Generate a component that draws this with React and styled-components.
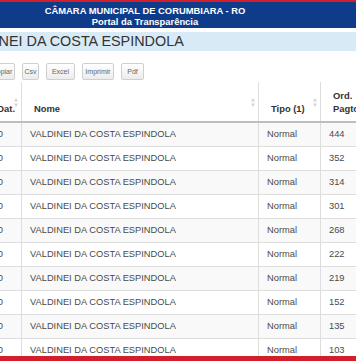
import React from "react";
import styled, { createGlobalStyle } from "styled-components";

const GlobalStyle = createGlobalStyle`
  html, body {
    margin: 0;
    padding: 0;
    overflow: hidden;
    background: #fff;
    font-family: "Liberation Sans", Arial, sans-serif;
  }
`

const Page = styled.div`
  width: 356px;
  height: 361px;
  overflow: hidden;
`

const TopBar = styled.header`
  border-top: 2px solid #d21f2b;
  background: #0e3c8b;
  color: #fff;
  font-weight: bold;
  font-size: 9.4px;
  line-height: 11px;
  text-align: center;
  height: 21px;
  padding: 3px 66px 2px 0;
`

// whole content scrolled to the left, like the original page
const Content = styled.div`
  margin-left: -60px;
`

const TitleBar = styled.h2`
  margin: 4px 0 0;
  height: 19px;
  line-height: 19px;
  background: #d8eaf5;
  color: #333;
  font-size: 14.4px;
  font-weight: normal;
  padding-left: 18px;
  white-space: nowrap;
`

const Toolbar = styled.div`
  display: flex;
  gap: 7px;
  margin-top: 12px;
  padding-left: 49px;
`

const ToolButton = styled.button`
  display: flex;
  align-items: center;
  justify-content: center;
  box-sizing: border-box;
  width: ${(p) => p.$w}px;
  height: 17px;
  padding: 0;
  border: 1px solid #cfcfcf;
  border-radius: 2px;
  background: linear-gradient(#ffffff, #ececec);
  font-family: inherit;
  font-size: 7px;
  color: #666;
`

const Table = styled.table`
  margin-top: 2px;
  width: 430px;
  border-collapse: collapse;
  table-layout: fixed;
`

const Th = styled.th`
  position: relative;
  box-sizing: border-box;
  height: 40px;
  padding: 0 ${(p) => p.$padRight || 12}px 6px 12px;
  border-left: 1px solid #ddd;
  border-right: 1px solid #ddd;
  border-bottom: 2px solid #bdbdbd;
  vertical-align: bottom;
  text-align: ${(p) => p.$align || "left"};
  font-size: 9.4px;
  line-height: 13px;
  font-weight: bold;
  color: #333;
  white-space: ${(p) => (p.$nowrap ? "nowrap" : "normal")};
  overflow: hidden;
`

const SortIcon = styled.svg`
  position: absolute;
  right: 3px;
  top: 16px;
`

const Row = styled.tr`
  background: ${(p) => (p.$odd ? "#f9f9f9" : "#fff")};
`

const Td = styled.td`
  box-sizing: border-box;
  height: 24px;
  padding: 0 ${(p) => p.$padRight || 8}px 0 8px;
  border: 1px solid #ddd;
  text-align: ${(p) => p.$align || "left"};
  font-size: 9.3px;
  color: #4a4a4a;
  white-space: nowrap;
  overflow: hidden;
`

const Footer = styled.div`
  position: fixed;
  left: 0;
  right: 0;
  bottom: 0;
  height: 5px;
  background: #d21f2b;
`

const Sort = () => (
  <SortIcon width="4" height="9" viewBox="0 0 4 9">
    <path d="M2 0 L4 3.5 L0 3.5 Z" fill="#d4d4d4" />
    <path d="M2 9 L4 5.5 L0 5.5 Z" fill="#d4d4d4" />
  </SortIcon>
)

const ordens = ["444", "352", "314", "301", "268", "222", "219", "152", "135", "103"]

const App = () => {
  return (
    <Page>
      <GlobalStyle />
      <TopBar>
        <div>CÂMARA MUNICIPAL DE CORUMBIARA - RO</div>
        <div>Portal da Transparência</div>
      </TopBar>
      <Content>
        <TitleBar>VALDINEI DA COSTA ESPINDOLA</TitleBar>
        <Toolbar>
          <ToolButton $w={26}>Copiar</ToolButton>
          <ToolButton $w={17}>Csv</ToolButton>
          <ToolButton $w={29}>Excel</ToolButton>
          <ToolButton $w={32}>Imprimir</ToolButton>
          <ToolButton $w={23}>Pdf</ToolButton>
        </Toolbar>
        <Table>
          <colgroup>
            <col style={{ width: 81 }} />
            <col style={{ width: 237 }} />
            <col style={{ width: 62 }} />
            <col style={{ width: 50 }} />
          </colgroup>
          <thead>
            <tr>
              <Th $align="right" $padRight={6} $nowrap>Dt. Pagto Dat.<Sort /></Th>
              <Th>Nome<Sort /></Th>
              <Th>Tipo (1)<Sort /></Th>
              <Th>Ord. Pagto</Th>
            </tr>
          </thead>
          <tbody>
            {ordens.map((ord, index) => (
              <Row key={ord} $odd={index % 2 === 0}>
                <Td $align="right" $padRight={18}>2020</Td>
                <Td>VALDINEI DA COSTA ESPINDOLA</Td>
                <Td>Normal</Td>
                <Td>{ord}</Td>
              </Row>
            ))}
          </tbody>
        </Table>
      </Content>
      <Footer />
    </Page>
  )
}

export default App
